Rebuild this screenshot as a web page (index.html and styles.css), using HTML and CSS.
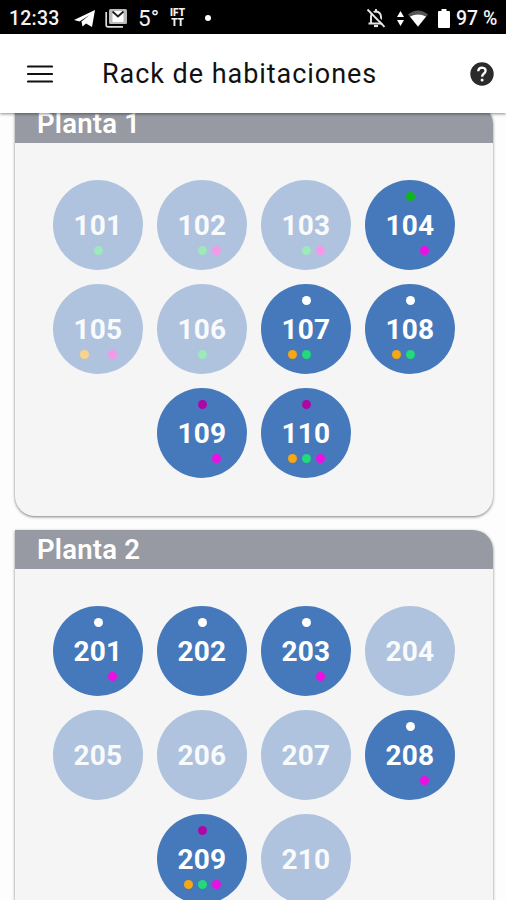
FILE: index.html
```html
<!DOCTYPE html>
<html lang="es">
<head>
<meta charset="UTF-8">
<meta name="viewport" content="width=device-width, initial-scale=1.0">
<title>Rack de habitaciones</title>
<link rel="stylesheet" href="styles.css">
</head>
<body>

<div class="statusbar">
  <span class="clock">12:33</span>
  <svg class="telegram" width="22" height="19" viewBox="0 0 22 19"><path d="M0 11 L21 1 L18 18 L12 14.500 L8.500 17.500 L7.500 12.500 L15.500 6 L5.500 12.500 Z" fill="#fff"/></svg>
  <svg class="gmail" width="23" height="20" viewBox="0 0 23 20"><path d="M1.200 4V17.200Q1.200 18.800 3 18.800H18" fill="none" stroke="#ddd" stroke-width="1.700"/><rect x="4" y="1" width="18" height="15" rx="1.500" fill="#bbb"/><path d="M7.500 3H18.500V14H7.500Z" fill="#fff"/><path d="M7.500 3.500L13 8.500L18.500 3.500" fill="none" stroke="#222" stroke-width="2"/></svg>
  <span class="temp">5°</span>
  <span class="ifttt"><span>IFT</span><span>TT</span></span>
  <span class="more"></span>
  <span class="spacer"></span>
  <svg class="bell" width="20" height="20" viewBox="0 0 20 20" fill="none" stroke="#e6e6e6" stroke-width="1.900"><path d="M5 15V8.500Q5.500 4 10 3.500Q14.500 4 15 8.500V15M2.500 15.500H17.500M10 1V4"/><path d="M8 18H12" stroke-width="2.200"/><path d="M2.800 .5L20 17.500" stroke="#000" stroke-width="2"/><path d="M1.500 1.500L18.500 18.800"/></svg>
  <svg class="data" width="7" height="15" viewBox="0 0 7 15" fill="#fff"><path d="M3.500 0L7 6H0ZM3.500 15L0 9H7Z"/></svg>
  <svg class="wifi" width="20" height="17" viewBox="0 0 20 17"><path d="M0 4.500Q10-3.500 20 4.500L10 17Z" fill="#555"/><path d="M2 6.500Q10 2.500 18 6.500L10 16.500Z" fill="#fff"/></svg>
  <svg class="battery" width="12" height="19" viewBox="0 0 12 19"><path d="M3.500 0H8.500V2H11Q12 2 12 3V18Q12 19 11 19H1Q0 19 0 18V3Q0 2 1 2H3.500Z" fill="#fff"/></svg>
  <span class="percent">97 %</span>
</div>

<header class="appbar">
  <svg class="menu" width="26" height="18" viewBox="0 0 26 18"><path d="M1 1.500H25M1 9H25M1 16.500H25" stroke="#111" stroke-width="2.200" stroke-linecap="round"/></svg>
  <h1>Rack de habitaciones</h1>
  <svg class="help" width="24" height="24" viewBox="0 0 24 24"><circle cx="12" cy="12" r="11.700" fill="#2b2b2b"/><path d="M8.200 9.200Q8.400 5.600 12 5.600Q15.700 5.800 15.600 8.900Q15.500 10.400 13.700 11.700Q12.200 12.800 12.100 14.700" fill="none" stroke="#fff" stroke-width="2.300"/><circle cx="12.100" cy="18" r="1.500" fill="#fff"/></svg>
</header>

<main class="content">
  <section class="floor">
    <h2>Planta 1</h2>
    <div class="rooms" id="floor1"></div>
  </section>
  <section class="floor">
    <h2>Planta 2</h2>
    <div class="rooms" id="floor2"></div>
  </section>
</main>

<script>
    // status: color of the top dot, marks: the dots under the number
    const floors = {
      floor1: [
        { number: 101, free: true, marks: ["green"] },
        { number: 102, free: true, marks: ["green", "pink"] },
        { number: 103, free: true, marks: ["green", "pink"] },
        { number: 104, status: "ready", marks: ["pink"] },
        { number: 105, free: true, marks: ["orange", "pink"] },
        { number: 106, free: true, marks: ["green"] },
        { number: 107, status: "white", marks: ["orange", "green"] },
        { number: 108, status: "white", marks: ["orange", "green"] },
        { number: 109, status: "purple", marks: ["pink"] },
        { number: 110, status: "purple", marks: ["orange", "green", "pink"] }
      ],
      floor2: [
        { number: 201, status: "white", marks: ["pink"] },
        { number: 202, status: "white", marks: [] },
        { number: 203, status: "white", marks: ["pink"] },
        { number: 204, free: true, marks: [] },
        { number: 205, free: true, marks: [] },
        { number: 206, free: true, marks: [] },
        { number: 207, free: true, marks: [] },
        { number: 208, status: "white", marks: ["pink"] },
        { number: 209, status: "purple", marks: ["orange", "green", "pink"] },
        { number: 210, free: true, marks: [] }
      ]
    };

    function renderRooms(id) {
      document.getElementById(id).innerHTML = floors[id].map(room => `
        <div class="room ${room.free ? "free" : ""}">
          <span class="dot ${room.status || ""}"></span>
          <span class="number">${room.number}</span>
          <div class="marks">
            ${["orange", "green", "pink"].map(c => `<span class="dot ${room.marks.includes(c) ? c : ""}"></span>`).join("")}
          </div>
        </div>
      `).join("");
    }

    renderRooms("floor1");
    renderRooms("floor2");
</script>

</body>
</html>
```
FILE: styles.css
```css
* {
  box-sizing: border-box;
}
html, body {
  height: 100%;
  margin: 0;
  overflow: hidden;
}
body {
  display: flex;
  flex-direction: column;
  background-color: #fdfdfd;
  font-family: Roboto, sans-serif;
}
svg {
  display: block;
  flex: none;
}
.statusbar {
  flex: none;
  display: flex;
  align-items: center;
  height: 34px;
  padding: 2px 8px 0 9px;
  background-color: #000;
  color: #f4f4f4;
  font-size: 19.5px;
  font-weight: 500;
  white-space: nowrap;
}
.clock {
  width: 65px;
  letter-spacing: 0.2px;
}
.gmail {
  margin-left: 9px;
}
.temp {
  width: 31px;
  margin-left: 10px;
  font-size: 22.5px;
  font-weight: 400;
}
.ifttt {
  display: flex;
  flex-direction: column;
  align-items: center;
  width: 17px;
  font-size: 10px;
  font-weight: 900;
  line-height: 10px;
}
.more {
  width: 6px;
  height: 6px;
  margin-left: 19px;
  border-radius: 50%;
  background-color: #fff;
}
.spacer {
  flex: 1;
}
.data {
  margin-left: 11px;
}
.wifi {
  margin-left: 4px;
}
.battery {
  margin-left: 10px;
}
.percent {
  width: 42px;
  margin-left: 6px;
}
.appbar {
  position: relative;
  z-index: 1;
  flex: none;
  display: flex;
  align-items: center;
  height: 79px;
  padding: 0 12px 0 27px;
  background-color: #fff;
  box-shadow: 0 1px 3px rgba(0,0,0,0.45);
}
.appbar h1 {
  flex: 1;
  margin: 1px 0 0 49px;
  color: #111;
  font-size: 27px;
  font-weight: 400;
  letter-spacing: 0.95px;
  white-space: nowrap;
}
.content {
  flex: none;
  display: flex;
  flex-direction: column;
  gap: 14px;
  margin-top: -9px;
  padding: 0 13.5px 0 14.5px;
}
.floor {
  height: 412px;
  overflow: hidden;
  border-radius: 0 20px 20px 20px;
  background-color: #f5f5f5;
  box-shadow: 0 1px 3px rgba(0,0,0,0.5);
}
.floor h2 {
  height: 38.5px;
  margin: 0;
  padding-left: 22.5px;
  background-color: #989aa3;
  color: #fff;
  font-size: 27.5px;
  font-weight: 600;
  line-height: 39px;
  letter-spacing: 0.2px;
}
.rooms {
  display: flex;
  flex-wrap: wrap;
  justify-content: center;
  gap: 14px;
  padding: 37px 30px 0 30px;
}
.room {
  display: flex;
  flex-direction: column;
  align-items: center;
  width: 90px;
  height: 90px;
  padding: 12px 0 0 1px;
  border-radius: 50%;
  background-color: #4679bc;
  color: #fff;
}
.free {
  background-color: #afc3df;
  color: #f9fafc;
}
.number {
  height: 45px;
  font-size: 28px;
  font-weight: 700;
  line-height: 49px;
  letter-spacing: 0.2px;
}
.marks {
  display: flex;
  gap: 5px;
}
.dot {
  width: 9px;
  height: 9px;
  border-radius: 50%;
}
.white {
  background-color: #fff;
}
.ready {
  background-color: #10b51d;
}
.purple {
  background-color: #ad08a5;
}
.orange {
  background-color: #f5a814;
}
.green {
  background-color: #22d97b;
}
.pink {
  background-color: #f00de4;
}
.free .orange {
  background-color: #f9d58c;
}
.free .green {
  background-color: #9ee9bb;
}
.free .pink {
  background-color: #f598e8;
}
```
